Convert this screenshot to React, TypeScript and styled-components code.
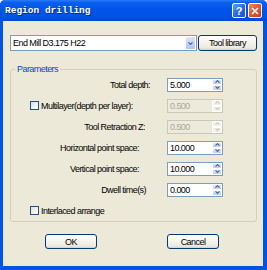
import styled, { createGlobalStyle } from "styled-components";

const GlobalStyle = createGlobalStyle`
  html, body {
    margin: 0;
    padding: 0;
    background: #ffffff;
  }
  body {
    font-family: "Liberation Sans", Arial, sans-serif;
  }
`;

const Window = styled.div`
  width: 267px;
  height: 270px;
  display: flex;
  flex-direction: column;
  background: #0054e3;
  border-radius: 5px 5px 0 0;
  overflow: hidden;
`;

const TitleBar = styled.div`
  height: 21px;
  flex: none;
  display: flex;
  align-items: center;
  justify-content: space-between;
  padding: 0 5px 0 5px;
  background: linear-gradient(
    to bottom,
    #2a7df5 0%,
    #0a5fef 12%,
    #0055e8 45%,
    #0052e6 80%,
    #0047d6 100%
  );
`;

const Title = styled.span`
  font-family: "Liberation Mono", "Courier New", monospace;
  font-weight: bold;
  font-size: 9.5px;
  color: #ffffff;
  text-shadow: 1px 1px 0 #0a2a8a;
  white-space: nowrap;
`;

const Caption = styled.div`
  display: flex;
  gap: 2px;
  align-items: center;
`;

const CaptionButton = styled.div<{ $kind: "help" | "close" }>`
  width: 14px;
  height: 15px;
  box-sizing: border-box;
  border: 1px solid #ffffff;
  border-radius: 2px;
  display: flex;
  align-items: center;
  justify-content: center;
  color: #ffffff;
  font-weight: bold;
  font-size: 11px;
  background: ${(p) =>
    p.$kind === "close"
      ? "linear-gradient(135deg, #f08a64 0%, #e2542c 50%, #c8401c 100%)"
      : "linear-gradient(135deg, #6a9cf7 0%, #2d68e8 50%, #1a4fd6 100%)"};
`;

const Body = styled.div`
  flex: 1;
  margin: 0 4px 4px 3px;
  background: #ece9d8;
  display: flex;
  flex-direction: column;
`;

const ToolRow = styled.div`
  display: flex;
  gap: 1px;
  margin: 14px 6px 0 7px;
  height: 16px;
`;

const Combo = styled.div`
  width: 187px;
  box-sizing: border-box;
  border: 1px solid #7f9db9;
  background: #ffffff;
  display: flex;
  align-items: center;
  justify-content: space-between;
  padding-left: 2px;
`;

const Text = styled.span<{ $muted?: boolean }>`
  font-size: 9px;
  letter-spacing: -0.55px;
  color: ${(p) => (p.$muted ? "#aca899" : "#000000")};
  white-space: nowrap;
`;

const DropButton = styled.div`
  width: 11px;
  height: 14px;
  box-sizing: border-box;
  border: 1px solid #ffffff;
  border-radius: 2px;
  background: linear-gradient(to bottom, #dbe5fd 0%, #bcd0fa 60%, #aec4f6 100%);
  display: flex;
  align-items: center;
  justify-content: center;
`;

const PushButton = styled.button<{ $w: number; $h: number }>`
  width: ${(p) => p.$w}px;
  height: ${(p) => p.$h}px;
  box-sizing: border-box;
  padding: 0;
  border: 1px solid #003c74;
  border-radius: 3px;
  background: linear-gradient(to bottom, #ffffff 0%, #f6f5f0 40%, #ebe9e0 85%, #d6d0c5 100%);
  font-family: "Liberation Sans", Arial, sans-serif;
  display: flex;
  align-items: center;
  justify-content: center;
`;

const Group = styled.fieldset`
  margin: 13px 6px 0 7px;
  padding: 0 33px 0 0;
  border: 1px solid #d0d0bf;
  border-radius: 3px;
  min-width: 0;
`;

const Legend = styled.legend`
  margin-left: 4px;
  padding: 0 2px;
  font-size: 9px;
  line-height: 10px;
  letter-spacing: -0.55px;
  color: #0046d5;
`;

const Row = styled.div`
  height: 21px;
  display: flex;
  align-items: center;
`;

const LabelCell = styled.div<{ $gap: number }>`
  flex: 1;
  display: flex;
  justify-content: flex-end;
  padding-right: ${(p) => p.$gap}px;
`;

const CheckCell = styled.div`
  flex: 1;
  display: flex;
  align-items: center;
  gap: 2px;
  padding-left: 19px;
`;

const CheckBox = styled.span`
  width: 9px;
  height: 9px;
  box-sizing: border-box;
  border: 1px solid #1c5180;
  background: linear-gradient(135deg, #dcdcd7 0%, #f4f4f0 60%, #ffffff 100%);
  flex: none;
`;

const Spin = styled.div<{ $disabled?: boolean }>`
  width: 56px;
  height: 14px;
  box-sizing: border-box;
  border: 1px solid ${(p) => (p.$disabled ? "#c9c7ba" : "#7f9db9")};
  background: ${(p) => (p.$disabled ? "#ebeadb" : "#ffffff")};
  display: flex;
  align-items: stretch;
  justify-content: space-between;
  padding-left: 2px;
  flex: none;
`;

const SpinValue = styled.div`
  display: flex;
  align-items: center;
`;

const SpinButtons = styled.div`
  width: 10px;
  display: flex;
  flex-direction: column;
`;

const SpinHalf = styled.div<{ $disabled?: boolean }>`
  flex: 1;
  box-sizing: border-box;
  border: 1px solid #ffffff;
  border-radius: 1px;
  background: ${(p) =>
    p.$disabled
      ? "#f3f2ea"
      : "linear-gradient(to bottom, #d9e4fd 0%, #bdd0f9 100%)"};
  display: flex;
  align-items: center;
  justify-content: center;
`;

const Buttons = styled.div`
  display: flex;
  gap: 70px;
  margin-top: 12px;
  padding-left: 42px;
`;

function Chevron({ up, color, size = 5 }: { up?: boolean; color: string; size?: number }) {
  return (
    <svg width={size} height={3} viewBox="0 0 5 3">
      <polyline
        points={up ? "0.5,2.6 2.5,0.6 4.5,2.6" : "0.5,0.4 2.5,2.4 4.5,0.4"}
        fill="none"
        stroke={color}
        strokeWidth="1.1"
      />
    </svg>
  );
}

function SpinBox({ value, disabled }: { value: string; disabled?: boolean }) {
  const arrow = disabled ? "#c9c7ba" : "#4d6185";
  return (
    <Spin $disabled={disabled}>
      <SpinValue>
        <Text $muted={disabled}>{value}</Text>
      </SpinValue>
      <SpinButtons>
        <SpinHalf $disabled={disabled}>
          <Chevron up color={arrow} />
        </SpinHalf>
        <SpinHalf $disabled={disabled}>
          <Chevron color={arrow} />
        </SpinHalf>
      </SpinButtons>
    </Spin>
  );
}

const fields = [
  { label: "Total depth:", gap: 17, value: "5.000" },
  { label: "Multilayer(depth per layer):", check: true, value: "0.500", disabled: true },
  { label: "Tool Retraction Z:", gap: 22, value: "0.500", disabled: true },
  { label: "Horizontal point space:", gap: 28, value: "10.000" },
  { label: "Vertical point space:", gap: 28, value: "10.000" },
  { label: "Dwell time(s)", gap: 21, value: "0.000" },
];

export default function App() {
  return (
    <>
      <GlobalStyle />
      <Window>
        <TitleBar>
          <Title>Region drilling</Title>
          <Caption>
            <CaptionButton $kind="help">?</CaptionButton>
            <CaptionButton $kind="close">
              <svg width="8" height="8" viewBox="0 0 8 8">
                <path d="M1 1 L7 7 M7 1 L1 7" stroke="#ffffff" strokeWidth="1.6" />
              </svg>
            </CaptionButton>
          </Caption>
        </TitleBar>
        <Body>
          <ToolRow>
            <Combo>
              <Text>End Mill D3.175 H22</Text>
              <DropButton>
                <Chevron color="#4d6185" size={5} />
              </DropButton>
            </Combo>
            <PushButton $w={59} $h={16}>
              <Text>Tool library</Text>
            </PushButton>
          </ToolRow>
          <Group>
            <Legend>Parameters</Legend>
            {fields.map((f) => (
              <Row key={f.label}>
                {f.check ? (
                  <CheckCell>
                    <CheckBox />
                    <Text>{f.label}</Text>
                  </CheckCell>
                ) : (
                  <LabelCell $gap={f.gap ?? 0}>
                    <Text>{f.label}</Text>
                  </LabelCell>
                )}
                <SpinBox value={f.value} disabled={f.disabled} />
              </Row>
            ))}
            <Row>
              <CheckCell>
                <CheckBox />
                <Text>Interlaced arrange</Text>
              </CheckCell>
            </Row>
          </Group>
          <Buttons>
            <PushButton $w={52} $h={15}>
              <Text>OK</Text>
            </PushButton>
            <PushButton $w={52} $h={15}>
              <Text>Cancel</Text>
            </PushButton>
          </Buttons>
        </Body>
      </Window>
    </>
  );
}
